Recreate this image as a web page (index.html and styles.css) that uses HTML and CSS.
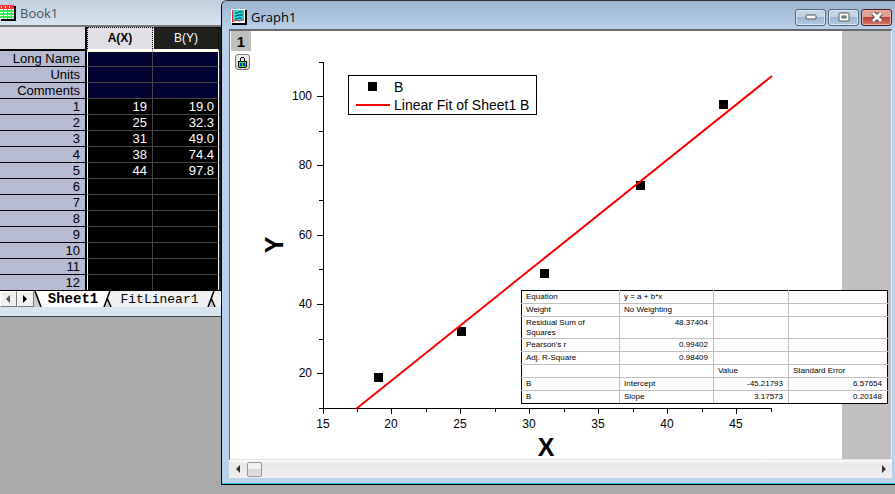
FILE: index.html
```html
<!DOCTYPE html>
<html lang="en">
<head>
<meta charset="UTF-8">
<title>Graph1</title>
<link rel="stylesheet" href="styles.css">
</head>
<body>

<main class="desktop">

  <section class="window book">
    <header class="book-title">
      <svg class="book-icon" width="16" height="16" viewBox="0 0 16 16">
        <path d="M1 1h15v15H1z" fill="#000"/>
        <path d="M0 0h14v14H0z" fill="#fff"/>
        <path d="M0 0h14v4H0z" fill="#f33"/>
        <path d="M0 5h3v2H0zM4 5h3v2H4zM8 5h3v2H8zM12 5h2v2h-2zM0 8h3v2H0zM4 8h3v2H4zM8 8h3v2H8zM12 8h2v2h-2zM0 11h3v2H0zM4 11h3v2H4zM8 11h3v2H8zM12 11h2v2h-2z" fill="#3e5"/>
        <path d="M3.500 4v10M7.500 4v10M11.500 4v10" stroke="#b8c" fill="none"/>
        <path d="M1 1h1v2H1zM5 1h1v2H5zM9 1h1v2H9z" fill="#fff"/>
      </svg>
      <span>Book1</span>
    </header>
    <div class="sheet-area">
      <table class="sheet">
        <thead>
          <tr><td class="corner"></td><th class="col-a" scope="col">A(X)</th><th class="col-b" scope="col">B(Y)</th></tr>
        </thead>
        <tbody>
          <tr class="info"><th scope="row">Long Name</th><td></td><td></td></tr>
          <tr class="info"><th scope="row">Units</th><td></td><td></td></tr>
          <tr class="info"><th scope="row">Comments</th><td></td><td></td></tr>
          <tr><th scope="row">1</th><td>19</td><td>19.0</td></tr>
          <tr><th scope="row">2</th><td>25</td><td>32.3</td></tr>
          <tr><th scope="row">3</th><td>31</td><td>49.0</td></tr>
          <tr><th scope="row">4</th><td>38</td><td>74.4</td></tr>
          <tr><th scope="row">5</th><td>44</td><td>97.8</td></tr>
          <tr><th scope="row">6</th><td></td><td></td></tr>
          <tr><th scope="row">7</th><td></td><td></td></tr>
          <tr><th scope="row">8</th><td></td><td></td></tr>
          <tr><th scope="row">9</th><td></td><td></td></tr>
          <tr><th scope="row">10</th><td></td><td></td></tr>
          <tr><th scope="row">11</th><td></td><td></td></tr>
          <tr><th scope="row">12</th><td></td><td></td></tr>
        </tbody>
      </table>
    </div>
    <nav class="tabs">
      <button class="step" aria-label="Previous sheet"><svg width="5" height="8" viewBox="0 0 5 8"><path d="M4 0v8L0 4z" fill="#555"/></svg></button>
      <button class="step" aria-label="Next sheet"><svg width="5" height="8" viewBox="0 0 5 8"><path d="M0 0v8l4-4z" fill="#000"/></svg></button>
      <svg class="slash first" width="9" height="16" viewBox="0 0 9 16"><path d="M1 0h8v16H7z" fill="#fff"/><path d="M1 0l6 16" stroke="#000" stroke-width="1.500" fill="none"/></svg>
      <button class="tab active">Sheet1</button>
      <svg class="slash" width="9" height="16" viewBox="0 0 9 16"><path d="M0 0h8L1 16H0z" fill="#fff"/><path d="M4 8L1 16h6z" fill="#ccc"/><path d="M7 0L1 16M4 7l4 9" stroke="#000" stroke-width="1.500" fill="none"/></svg>
      <button class="tab">FitLinear1</button>
      <svg class="slash" width="9" height="16" viewBox="0 0 9 16"><path d="M4 8L1 16h6z" fill="#ccc"/><path d="M7 0L1 16M4 7l4 9" stroke="#000" stroke-width="1.500" fill="none"/></svg>
    </nav>
  </section>

  <section class="window graph">
    <header class="graph-title">
      <svg width="16" height="16" viewBox="0 0 16 16">
        <path d="M1 1h15v15H1z" fill="#000"/>
        <path d="M0 0h14v14H0z" fill="#fff"/>
        <path d="M2 1h11v11H2z" fill="#2dd"/>
        <path d="M4 4h2l1-1h5M4 7h2l1-1h5M4 10h2l1-1h4" stroke="#034" fill="none"/>
        <path d="M1.500 1v12M1 13l4-2 4 1 4-2" stroke="#c33" fill="none"/>
      </svg>
      <span>Graph1</span>
      <div class="controls">
        <button aria-label="Minimize"><svg width="12" height="6" viewBox="0 0 12 6"><rect x="1" y="1" width="10" height="4" rx="1" fill="#fff" stroke="#555"/></svg></button>
        <button aria-label="Maximize"><svg width="12" height="10" viewBox="0 0 12 10"><rect x="1" y="1" width="10" height="8" rx="1" fill="#fff" stroke="#555"/><rect x="4" y="4" width="4" height="2" fill="#8ac" stroke="#555"/></svg></button>
        <button class="close" aria-label="Close"><svg width="12" height="10" viewBox="0 0 12 10"><path d="M2 1l8 8M10 1L2 9" stroke="#545" stroke-width="5"/><path d="M2 1l8 8M10 1L2 9" stroke="#fff" stroke-width="3"/></svg></button>
      </div>
    </header>

    <div class="canvas">
      <div class="page">
        <svg class="chart" width="612" height="428" viewBox="230 31 612 428">
          <!-- axes -->
          <g class="axis">
            <path d="M323.500 62v350M319 408.500h453"/>
            <path d="M317 96.500h6M317 165.500h6M317 235.500h6M317 304.500h6M317 373.500h6"/>
            <path d="M319 62.500h4M319 131.500h4M319 200.500h4M319 269.500h4M319 339.500h4"/>
            <path d="M323.500 408v6M391.500 408v6M460.500 408v6M529.500 408v6M598.500 408v6M667.500 408v6M736.500 408v6"/>
            <path d="M357.500 408v4M426.500 408v4M495.500 408v4M564.500 408v4M633.500 408v4M702.500 408v4M771.500 408v4"/>
          </g>
          <g class="y-labels">
            <text x="312" y="100">100</text>
            <text x="312" y="169">80</text>
            <text x="312" y="239">60</text>
            <text x="312" y="308">40</text>
            <text x="312" y="377">20</text>
          </g>
          <g class="x-labels">
            <text x="323" y="428">15</text>
            <text x="391" y="428">20</text>
            <text x="460" y="428">25</text>
            <text x="529" y="428">30</text>
            <text x="598" y="428">35</text>
            <text x="667" y="428">40</text>
            <text x="736" y="428">45</text>
          </g>
          <text class="axis-title" x="546" y="456">X</text>
          <text class="axis-title" transform="translate(283 245) rotate(-90)">Y</text>

          <!-- data -->
          <path class="points" d="M374 373h9v9h-9zM457 327h9v9h-9zM540 269h9v9h-9zM636 181h9v9h-9zM719 100h9v9h-9z"/>
          <path class="fit" d="M356 409L772 76"/>

          <!-- legend -->
          <rect x="348.500" y="75.500" width="188" height="39" fill="#fff" stroke="#000"/>
          <path class="points" d="M368 82h9v9h-9z"/>
          <path class="fit" d="M356 105h34"/>
          <text class="legend" x="394" y="92">B</text>
          <text class="legend" x="394" y="110">Linear Fit of Sheet1 B</text>
        </svg>
        <div class="layer-tools">
          <button class="layer">1</button>
          <button class="lock" aria-label="Lock">
            <svg width="9" height="11" viewBox="0 0 9 11" shape-rendering="crispEdges"><path d="M3 0h3v1H3zM2 1h1v3H2zM6 1h1v3H6zM0 4h9v6H0zM1 10h7v1H1z" fill="#000"/><path d="M1 5h7v5H1z" fill="#2e3"/><path d="M2 6h2v3H2zM5 6h2v3H5z" fill="#12f"/></svg>
          </button>
        </div>
      </div>

      <table class="report">
        <colgroup><col class="c1"><col class="c2"><col class="c3"><col class="c4"></colgroup>
        <tbody>
          <tr><td>Equation</td><td>y = a + b*x</td><td></td><td></td></tr>
          <tr><td>Weight</td><td>No Weighting</td><td></td><td></td></tr>
          <tr class="tall"><td>Residual Sum of<br>Squares</td><td class="num">48.37404</td><td></td><td></td></tr>
          <tr><td>Pearson's r</td><td class="num">0.99402</td><td></td><td></td></tr>
          <tr><td>Adj. R-Square</td><td class="num">0.98409</td><td></td><td></td></tr>
          <tr><td></td><td></td><td>Value</td><td>Standard Error</td></tr>
          <tr><td>B</td><td>Intercept</td><td class="num">-45.21793</td><td class="num">6.57654</td></tr>
          <tr><td>B</td><td>Slope</td><td class="num">3.17573</td><td class="num">0.20148</td></tr>
        </tbody>
      </table>
    </div>

    <div class="scrollbar">
      <button class="arrow" aria-label="Scroll left"><svg width="4" height="8" viewBox="0 0 4 8"><path d="M4 0v8L0 4z" fill="#333"/></svg></button>
      <div class="thumb"></div>
      <button class="arrow right" aria-label="Scroll right"><svg width="4" height="8" viewBox="0 0 4 8"><path d="M0 0v8l4-4z" fill="#333"/></svg></button>
    </div>
  </section>

</main>

</body>
</html>
```
FILE: styles.css
```css
* {
  box-sizing: border-box;
}
body {
  margin: 0;
  font-family: "Liberation Sans", Arial, sans-serif;
  background-color: #ababab;
  color: #000;
}
button {
  font-family: inherit;
  padding: 0;
  margin: 0;
  border: none;
  background: none;
  display: flex;
  align-items: center;
  justify-content: center;
}
svg {
  display: block;
}
.desktop {
  position: relative;
  min-height: 100vh;
  overflow: hidden;
}
.window {
  position: absolute;
  top: 0;
}

/* worksheet */
.book {
  left: 0;
  width: 230px;
  background-color: #d7e4f2;
  padding-bottom: 9px;
  border-bottom: 1px solid #444;
}
.book-title {
  display: flex;
  align-items: center;
  gap: 4px;
  height: 27px;
  background: linear-gradient(#c1cfdd, #d7e4f2);
  border-bottom: 2px solid #777;
  font-family: "Open Sans", sans-serif;
  font-size: 13px;
  color: #46515c;
}
.sheet-area {
  height: 263px;
  overflow: hidden;
  background-color: #222;
}
.sheet {
  table-layout: fixed;
  width: 219px;
  border-collapse: separate;
  border-spacing: 0;
  font-size: 13px;
  line-height: 15px;
}
.sheet th,
.sheet td {
  height: 16px;
  padding: 0 4px;
  font-weight: normal;
  text-align: right;
}
.sheet .corner {
  width: 87px;
  height: 24px;
  background-color: #e0dfe5;
  border-right: 2px solid #000;
  border-bottom: 2px solid #000;
}
.sheet .col-a,
.sheet .col-b {
  text-align: center;
  border: 1px dotted #000;
  border-bottom: 2px solid #fff;
  font-size: 12px;
}
.sheet .col-a {
  background-color: #e0dfe5;
  font-weight: bold;
}
.sheet .col-b {
  background-color: #20211c;
  border-left: 1px solid #fff;
  color: #fff;
}
.sheet tbody th {
  background-color: #b7bbd3;
  border-bottom: 1px solid #000;
  border-right: 2px solid #000;
  padding-right: 5px;
}
.sheet tbody td {
  background-color: #000;
  color: #fff;
  border-bottom: 1px solid #444;
  border-right: 1px solid #444;
}
.sheet tbody td:nth-child(2) {
  border-left: 1px solid #fff;
  padding-right: 5px;
}
.sheet tbody td:nth-child(3) {
  border-right: 1px solid #fff;
}
.sheet .info td {
  background-color: #030333;
}
.sheet .info:first-child td {
  border-top: 1px solid #ffffc8;
}
.tabs {
  display: flex;
  height: 17px;
  background-color: #f0f0f0;
  border-top: 1px solid #000;
}
.step {
  width: 17px;
  background-color: #f0f0f0;
  border: 1px solid;
  border-color: #fff #777 #777 #fff;
}
.slash {
  flex: none;
}
.slash.first {
  background-color: #ccc;
}
.tab {
  font-family: "Liberation Mono", monospace;
  font-size: 13px;
  width: 95px;
}
.tab.active {
  width: 60px;
  background-color: #fff;
  font-size: 14px;
  font-weight: bold;
}

/* graph */
.graph {
  left: 221px;
  right: 0;
  background-color: #b9d1ea;
  border-left: 1px solid #000;
  border-top: 1px solid #333;
  border-bottom: 1px solid #000;
  border-radius: 6px 0 0 0;
  padding: 0 3px 6px 7px;
  box-shadow: inset 0 -1px 0 #1fd0e8;
}
.graph-title {
  display: flex;
  align-items: center;
  gap: 4px;
  height: 28px;
  margin: 0 -3px 0 -7px;
  padding: 4px 3px 0 9px;
  border-radius: 5px 0 0 0;
  background: linear-gradient(#99b4d1, #b9d1ea);
  font-family: "Open Sans", sans-serif;
  font-size: 13px;
}
.controls {
  display: flex;
  gap: 2px;
  margin-left: auto;
}
.controls button {
  width: 31px;
  height: 17px;
  border: 1px solid #51667e;
  border-radius: 3px;
  background: linear-gradient(#c3d4e6 50%, #9bb5d0 50%, #b4cce4);
  box-shadow: inset 0 0 0 1px #dbe7f3;
}
.controls .close {
  border-color: #4a1a20;
  background: linear-gradient(#e3a196 50%, #bb4431 50%, #d4796a);
  box-shadow: inset 0 0 0 1px #e9b3a9;
}
.canvas {
  position: relative;
  background-color: #c0c0c0;
  border-top: 2px solid #696969;
  border-left: 1px solid #696969;
  border-bottom: 1px solid #e3e3e3;
  border-right: 1px solid #e3e3e3;
}
.page {
  width: 612px;
  background-color: #fff;
}
.chart {
  overflow: visible;
}
.layer-tools {
  position: absolute;
  top: 0;
  left: 1px;
}
.layer {
  width: 20px;
  height: 20px;
  background-color: #c0c0c0;
  font-size: 15px;
  font-weight: bold;
}
.lock {
  width: 15px;
  height: 16px;
  margin: 3px 0 0 4px;
  border: 1px solid #777;
  border-radius: 3px;
  background: linear-gradient(#f2f2f2, #ccc);
}
.axis {
  stroke: #000;
  fill: none;
}
.y-labels,
.x-labels {
  font-size: 12px;
}
.y-labels {
  text-anchor: end;
}
.x-labels {
  text-anchor: middle;
}
.axis-title {
  font-size: 25px;
  font-weight: bold;
  text-anchor: middle;
}
.fit {
  stroke: #f00;
  stroke-width: 2;
  fill: none;
}
.legend {
  font-size: 14px;
}
.report {
  position: absolute;
  left: 291px;
  top: 259px;
  width: 367px;
  table-layout: fixed;
  border-collapse: collapse;
  border: 1px solid #000;
  background-color: #fff;
  font-size: 8px;
  line-height: 10px;
}
.report td {
  height: 13px;
  padding: 1px 5px 0 4px;
  border: 1px solid #c0c0c0;
  vertical-align: top;
  white-space: nowrap;
}
.report tr:first-child td {
  border-top-color: #000;
}
.report tr:last-child td {
  border-bottom-color: #000;
}
.report td:first-child {
  border-left-color: #000;
}
.report td:last-child {
  border-right-color: #000;
}
.report .tall td {
  height: 22px;
}
.report .num {
  text-align: right;
}
.c1 {
  width: 98px;
}
.c2 {
  width: 94px;
}
.c3 {
  width: 75px;
}
.scrollbar {
  display: flex;
  align-items: center;
  height: 18px;
  background: linear-gradient(#fff, #e8e8e8 20%, #f0f0f0);
}
.arrow {
  width: 17px;
  height: 16px;
}
.arrow.right {
  margin-left: auto;
}
.thumb {
  width: 15px;
  height: 15px;
  margin-left: 1px;
  border: 1px solid #979797;
  border-radius: 2px;
  background: linear-gradient(#f3f3f3 50%, #d8d8da 50%, #e0e0e0);
}
```
